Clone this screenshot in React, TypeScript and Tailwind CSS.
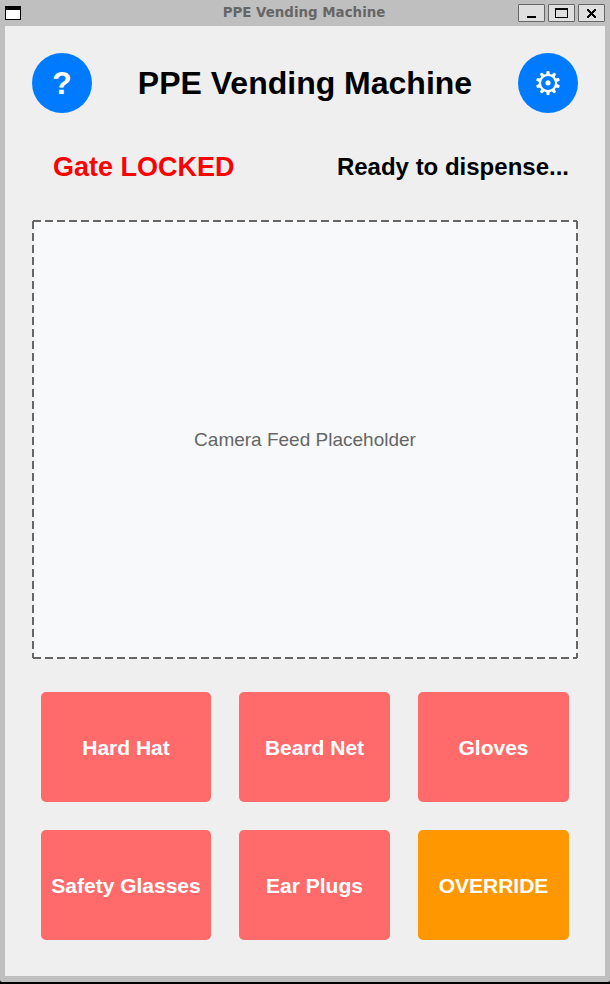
import React from "react";

const SANS = "font-['Liberation_Sans',Arial,sans-serif]";

type Item = { label: string; color: string };

const items: Item[] = [
  { label: "Hard Hat", color: "bg-[#ff6b6b]" },
  { label: "Beard Net", color: "bg-[#ff6b6b]" },
  { label: "Gloves", color: "bg-[#ff6b6b]" },
  { label: "Safety Glasses", color: "bg-[#ff6b6b]" },
  { label: "Ear Plugs", color: "bg-[#ff6b6b]" },
  { label: "OVERRIDE", color: "bg-[#ff9800]" },
];

const toothAngles = [0, 36, 72, 108, 144, 180, 216, 252, 288, 324];

function GearIcon() {
  return (
    <svg width="26" height="26" viewBox="-13 -13 26 26" fill="white">
      <circle r="8.1" fill="none" stroke="white" strokeWidth="2.3" />
      <circle cy="-0.2" r="2.6" />
      {toothAngles.map((angle) => (
        <path key={angle} d="M-1.9 -8.5L-1.3 -12H1.3L1.9 -8.5z" transform={`rotate(${angle})`} />
      ))}
    </svg>
  );
}

function WindowButton({ label, children }: { label: string; children: React.ReactNode }) {
  return (
    <button
      aria-label={label}
      className="h-[18px] w-[27px] rounded-[1px] border border-[#666666] bg-[#dfdfdf]"
    >
      <svg width="25" height="16" viewBox="0 0 25 16" shapeRendering="crispEdges" className="block">
        {children}
      </svg>
    </button>
  );
}

function TitleBar() {
  return (
    <header className="flex h-[26px] items-start justify-between pr-[5px] pl-[5px]">
      <div className="mt-1.5 h-3.5 w-4 border border-t-4 border-black bg-white" />
      <span className="ml-[69px] pt-1 font-['DejaVu_Sans',sans-serif] text-[13.4px] leading-[18px] font-bold whitespace-nowrap text-[#666666]">
        PPE Vending Machine
      </span>
      <div className="mt-1 flex gap-[3px]">
        <WindowButton label="Minimize">
          <rect x="8" y="11" width="9" height="2" />
        </WindowButton>
        <WindowButton label="Maximize">
          <path d="M6 3h13v10H6zM7 5v7h11V5z" fillRule="evenodd" />
        </WindowButton>
        <WindowButton label="Close">
          <path d="M8 4h2v1h1v1h1v1h1v-1h1v-1h1v-1h2v2h-1v1h-1v1h-1v1h1v1h1v1h1v2h-2v-1h-1v-1h-1v-1h-1v1h-1v1h-1v1h-2v-2h1v-1h1v-1h1v-1h-1v-1h-1v-1h-1z" />
        </WindowButton>
      </div>
    </header>
  );
}

function CameraFeed() {
  return (
    <section className="relative flex h-[439px] items-center justify-center bg-[#f8f9fa]">
      <svg
        className="absolute inset-0"
        width="546"
        height="439"
        viewBox="0 0 546 439"
        stroke="#666666"
        strokeWidth="2"
        strokeDasharray="8 4"
        shapeRendering="crispEdges"
      >
        <path d="M1 1H545" />
        <path d="M1 1V438" />
        <path d="M545 1V438" />
        <path d="M1 438H545" />
      </svg>
      <span className="text-[19px] leading-[22px] text-[#666666]">Camera Feed Placeholder</span>
    </section>
  );
}

export default function App() {
  return (
    <div className="h-[984px] w-[610px] overflow-hidden bg-black">
      <div className={`h-[982px] rounded-b-[2px] bg-[#bfbfbf] ${SANS}`}>
        <TitleBar />
        <main className="mx-[5px] h-[950px] bg-[#efefef] px-[27px] pt-[27px]">
          <div className="flex items-center justify-between">
            <button className="size-[60px] rounded-full bg-[#007bff] text-[32px] font-bold text-white">
              ?
            </button>
            <h1 className="text-[32px] leading-9 font-bold text-black">PPE Vending Machine</h1>
            <button
              aria-label="Settings"
              className="flex size-[60px] items-center justify-center rounded-full bg-[#007bff]"
            >
              <GearIcon />
            </button>
          </div>
          <div className="mt-[38px] flex h-8 items-center justify-between pr-[9px] pl-[21px]">
            <span className="text-[27px] leading-8 font-bold text-[#ff0000]">Gate LOCKED</span>
            <span className="text-2xl leading-8 font-bold text-black">Ready to dispense...</span>
          </div>
          <div className="mt-[37px]">
            <CameraFeed />
          </div>
          <div className="mt-[33px] grid grid-cols-[170px_151px_151px] gap-7 pl-[9px]">
            {items.map((item) => (
              <button
                key={item.label}
                className={`h-[110px] rounded-[5px] pt-0.5 text-[21px] font-bold whitespace-nowrap text-white ${item.color}`}
              >
                {item.label}
              </button>
            ))}
          </div>
        </main>
      </div>
    </div>
  );
}
